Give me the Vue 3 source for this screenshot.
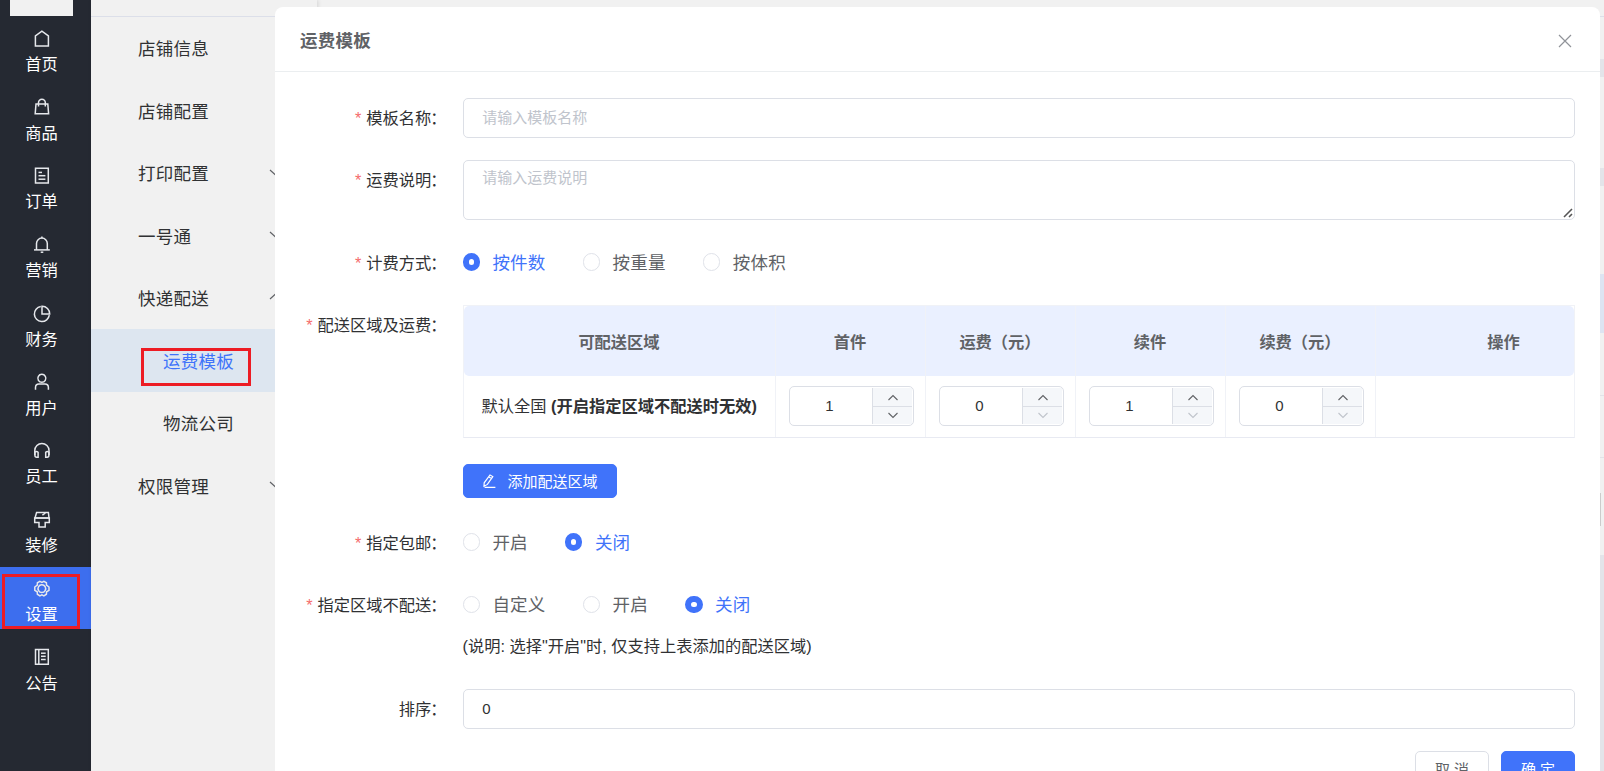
<template>
  <div class="page">
    <!-- Main navigation -->
    <aside class="sidebar">
      <div class="logo"></div>
      <nav class="nav">
        <a
            v-for="item in navItems"
            :key="item.title"
            class="nav-item"
            :class="{ active: item.title === activeNav }"
            @click="activeNav = item.title"
        >
          <svg class="nav-icon" viewBox="0 0 18 18" width="18" height="18">
            <path v-for="(d, i) in item.paths" :key="i" :d="d"/>
          </svg>
          <span>{{ item.title }}</span>
        </a>
      </nav>
    </aside>

    <!-- Settings submenu -->
    <aside class="submenu">
      <div class="submenu-top"></div>
      <div
          v-for="item in subItems"
          :key="item.title"
          class="submenu-item"
          :class="{ child: item.child, active: item.active }"
      >
        <span>{{ item.title }}</span>
        <svg v-if="item.arrow" class="arrow" :class="item.arrow" viewBox="0 0 14 8" width="14" height="8">
          <path d="M1 1L7 6.5L13 1"/>
        </svg>
      </div>
    </aside>

    <main class="content">
      <div class="content-top"></div>
      <div class="content-tabs"></div>
      <div class="band"></div>
      <div class="filters"></div>
      <div class="band"></div>
      <div class="toolbar"></div>
      <div class="table-head"></div>
      <div class="table-row"></div>
      <div class="table-row"></div>
      <div class="pager"><div class="scroll-mark"></div></div>
      <div class="rest"></div>
    </main>

    <!-- Freight template dialog -->
    <section class="dialog">
      <header class="dialog-header">
        <h3>运费模板</h3>
        <svg class="close" viewBox="0 0 14 14" width="14" height="14">
          <path d="M1 1L13 13M13 1L1 13"/>
        </svg>
      </header>

      <div class="form">
        <div class="form-item">
          <label class="required">模板名称<i>：</i></label>
          <input v-model="form.name" class="input" placeholder="请输入模板名称">
        </div>

        <div class="form-item">
          <label class="required">运费说明<i>：</i></label>
          <div class="textarea-wrap">
            <textarea v-model="form.info" class="textarea" placeholder="请输入运费说明"></textarea>
            <svg class="resize" viewBox="0 0 10 10" width="10" height="10">
              <path d="M1 9L9 1M6 9L9 6"/>
            </svg>
          </div>
        </div>

        <div class="form-item">
          <label class="required">计费方式<i>：</i></label>
          <div class="radios">
            <span
                v-for="text in typeOptions"
                :key="text"
                class="radio"
                :class="{ checked: form.type === text }"
                @click="form.type = text"
            ><i></i><span>{{ text }}</span></span>
          </div>
        </div>

        <div class="form-item region-item">
          <label class="required">配送区域及运费<i>：</i></label>
          <div class="region">
            <div class="table">
              <div class="row head">
                <div class="cell first">可配送区域</div>
                <div v-for="col in columns" :key="col.title" class="cell">{{ col.title }}</div>
                <div class="cell last"><span>操作</span></div>
              </div>
              <div class="row body">
                <div class="cell first">默认全国&nbsp;<b>(开启指定区域不配送时无效)</b></div>
                <div v-for="col in columns" :key="col.title" class="cell">
                  <div class="number">
                    <span class="value">{{ col.value }}</span>
                    <div class="steps">
                      <button @click="col.value++">
                        <svg viewBox="0 0 12 7" width="12" height="7"><path d="M1.5 6L6 1.5L10.5 6"/></svg>
                      </button>
                      <button :disabled="col.value <= col.min" @click="col.value--">
                        <svg viewBox="0 0 12 7" width="12" height="7"><path d="M1.5 1L6 5.5L10.5 1"/></svg>
                      </button>
                    </div>
                  </div>
                </div>
                <div class="cell last"></div>
              </div>
            </div>
            <button class="btn primary add">
              <svg viewBox="0 0 16 16" width="16" height="16">
                <path d="M9 2L11.8 3.6L6.4 11.4L3 13.3L3.2 9.8ZM7.8 3.9L10.6 5.5M3.6 14.4H14.4"/>
              </svg>
              <span>添加配送区域</span>
            </button>
          </div>
        </div>

        <div class="form-item">
          <label class="required">指定包邮<i>：</i></label>
          <div class="radios">
            <span
                v-for="text in freeOptions"
                :key="text"
                class="radio"
                :class="{ checked: form.free === text }"
                @click="form.free = text"
            ><i></i><span>{{ text }}</span></span>
          </div>
        </div>

        <div class="form-item">
          <label class="required">指定区域不配送<i>：</i></label>
          <div>
            <div class="radios">
              <span
                  v-for="text in excludeOptions"
                  :key="text"
                  class="radio"
                  :class="{ checked: form.exclude === text }"
                  @click="form.exclude = text"
              ><i></i><span>{{ text }}</span></span>
            </div>
            <p class="tip">(说明: 选择"开启"时, 仅支持上表添加的配送区域)</p>
          </div>
        </div>

        <div class="form-item">
          <label>排序<i>：</i></label>
          <input v-model="form.sort" class="input">
        </div>

        <div class="footer">
          <button class="btn">取 消</button>
          <button class="btn primary">确 定</button>
        </div>
      </div>
    </section>

    <div class="mark mark-nav"></div>
    <div class="mark mark-sub"></div>
  </div>
</template>

<script setup>
import { ref, reactive } from 'vue';

const activeNav = ref('设置');

// Navigation entries with their icon outlines
const navItems = [
  { title: '首页', paths: ['M2.4 16V5.9L8.9 1.2L15.4 5.9V16Z'] },
  { title: '商品', paths: ['M3 6H14.8L15.6 15.7H2.2Z', 'M5.5 8.5V4.6A3.4 3.4 0 0 1 12.3 4.6V8.5'] },
  { title: '订单', paths: ['M2.5 1.3H15.3V16H2.5Z', 'M5.5 5.4H9', 'M5.5 8.7H12.4', 'M5.5 12.2H12.4'] },
  { title: '营销', paths: ['M3.5 14V7.5A5.4 5.4 0 0 1 14.3 7.5V14', 'M1 13.9H16.8', 'M7.7 16.2H10.3', 'M8.9 0.5V2.2'] },
  { title: '财务', paths: ['M7.8 1.6A7.5 7.5 0 1 0 16.3 10.1', 'M9 1.2A7.6 7.6 0 0 1 16.7 8.9H9Z'] },
  { title: '用户', paths: ['M8.9 1.3A4 4 0 1 1 8.8 1.3Z', 'M2.5 16.8V14.4A3.4 3.4 0 0 1 5.9 11.1H12A3.4 3.4 0 0 1 15.4 14.4V16.8'] },
  { title: '员工', paths: ['M1.8 13V8.6A7.1 7.1 0 0 1 16 8.6V13', 'M1.9 10.3A2.3 2.3 0 0 1 5.1 10.3V15.2H3.8A2 2 0 0 1 1.9 13.2Z', 'M15.9 10.3A2.3 2.3 0 0 0 12.7 10.3V15.2H14A2 2 0 0 0 15.9 13.2Z'] },
  { title: '装修', paths: ['M3.6 1.5H15.4L16 7H2Z', 'M1.7 7H16.3V11.6H12.2V16H6V11.6H1.7Z', 'M9.4 4.2L12.4 2'] },
  { title: '设置', paths: ['M6.9 1.4L8.9 2.4L10.9 1.4L13.4 2.8L13.5 5.1L16 7V10.3L13.6 11.8L13.4 14.2L10.9 15.8L8.9 14.8L6.9 15.8L4.4 14.2L4.2 11.8L1.8 10.3V7L4.3 5.1L4.4 2.8Z', 'M8.9 4.8A3.8 3.8 0 1 1 8.8 4.8Z'] },
  { title: '公告', paths: ['M2.5 1.4H15.3V16.2H2.5Z', 'M5.8 1.5V16.1', 'M8 5.2H12.7', 'M8 8.3H12.7', 'M8 11.5H12.7'] },
];

const subItems = [
  { title: '店铺信息' },
  { title: '店铺配置' },
  { title: '打印配置', arrow: 'down' },
  { title: '一号通', arrow: 'down' },
  { title: '快递配送', arrow: 'up' },
  { title: '运费模板', child: true, active: true },
  { title: '物流公司', child: true },
  { title: '权限管理', arrow: 'down' },
];

const typeOptions = ['按件数', '按重量', '按体积'];
const freeOptions = ['开启', '关闭'];
const excludeOptions = ['自定义', '开启', '关闭'];

const form = reactive({
  name: '',
  info: '',
  type: '按件数',
  free: '关闭',
  exclude: '关闭',
  sort: '0',
});

const columns = reactive([
  { title: '首件', value: 1, min: 0 },
  { title: '运费（元）', value: 0, min: 0 },
  { title: '续件', value: 1, min: 1 },
  { title: '续费（元）', value: 0, min: 0 },
]);
</script>

<style>
body {
  margin: 0;
  overflow: hidden;
}
</style>

<style scoped>
.page {
  position: relative;
  display: flex;
  width: 100%;
  height: 100vh;
  overflow: hidden;
  background: #f1f1f1;
  color: #303133;
  font-family: "Liberation Sans", "Noto Sans CJK SC", sans-serif;
  font-size: 16.25px;
}

.page *,
.page *::before {
  box-sizing: border-box;
}

button,
input,
textarea {
  font-family: inherit;
}

/* Sidebar */
.sidebar {
  flex: none;
  width: 91px;
  background: #252932;
}

.logo {
  width: 63px;
  height: 16px;
  margin-left: 10px;
  background: #f1f1f1;
}

.nav {
  display: flex;
  flex-direction: column;
  gap: 6.75px;
  padding-top: 1px;
}

.nav-item {
  display: flex;
  flex-direction: column;
  align-items: center;
  height: 62px;
  padding: 12.5px 8px 0 0;
  color: #fff;
  line-height: 20px;
  cursor: pointer;
}

.nav-item.active {
  background: #3d6eee;
}

.nav-icon {
  margin-bottom: 6.4px;
  fill: none;
  stroke: #e6e8ec;
  stroke-width: 1.5;
}

/* Submenu */
.submenu {
  flex: none;
  width: 226px;
  box-shadow: 1px 0 4px rgba(0, 0, 0, 0.12);
}

.submenu-top {
  height: 16.8px;
  border-bottom: 1px solid #dcdfe9;
}

.submenu-item {
  display: flex;
  align-items: center;
  justify-content: space-between;
  height: 62.5px;
  padding: 0 34px 0 47px;
  font-size: 17.5px;
  letter-spacing: 0.25px;
}

.submenu-item span {
  margin-top: -1px;
}

.submenu-item.child {
  padding-left: 72px;
}

.submenu-item.active {
  background: #dde6f0;
  color: #4073fa;
}

.arrow {
  margin-top: -1px;
  fill: none;
  stroke: #606266;
  stroke-width: 1.2;
}

.arrow.up {
  margin-top: -4px;
  transform: rotate(180deg);
}

/* Page behind the dialog */
.content {
  flex: 1;
  display: flex;
  flex-direction: column;
}

.content-top {
  height: 17px;
  border-bottom: 1px solid #dcdfe9;
}

.content-tabs {
  height: 42px;
}

.band {
  height: 18px;
  background: #e3e4e9;
}

.filters {
  height: 91px;
}

.toolbar {
  height: 88px;
}

.table-head {
  height: 59px;
  background: #dde4f2;
}

.table-row {
  height: 62.5px;
  border-bottom: 1px solid #e2e3e8;
}

.pager {
  display: flex;
  justify-content: flex-end;
  height: 97px;
  padding: 35px 3px 0 0;
}

.scroll-mark {
  width: 1px;
  height: 33px;
  background: #ccc;
}

.rest {
  flex: 1;
  background: #e3e4e9;
}

/* Dialog */
.dialog {
  position: absolute;
  top: 7px;
  left: 275px;
  width: 1325px;
  height: 820px;
  background: #fff;
  border-radius: 8px;
}

.dialog-header {
  display: flex;
  align-items: center;
  justify-content: space-between;
  height: 65px;
  padding: 0 28px 0 25px;
  border-bottom: 1px solid #ebeef0;
}

.dialog-header h3 {
  margin: 0;
  color: #606266;
  font-size: 17.5px;
  letter-spacing: 0.25px;
}

.close {
  margin-top: 4px;
  fill: none;
  stroke: #909399;
  stroke-width: 1.2;
}

.form {
  padding: 25.6px 25px 0 0;
}

.form-item {
  display: grid;
  grid-template-columns: 187.5px 1fr;
  margin-bottom: 22.5px;
}

.form-item label {
  padding-right: 15px;
  line-height: 40px;
  text-align: right;
  white-space: nowrap;
}

/* Pull the full-width colon towards the text */
.form-item label i {
  font-style: normal;
  margin: 0 1px 0 -1px;
}

.required::before {
  content: "*";
  margin-right: 5px;
  color: #f56c6c;
}

.input {
  width: 100%;
  height: 40px;
  padding: 0 18.75px 1px;
  border: 1px solid #dcdfe6;
  border-radius: 5px;
  outline: none;
  color: #303133;
  font-size: 15px;
}

.textarea-wrap {
  position: relative;
  height: 60px;
}

.textarea {
  display: block;
  width: 100%;
  height: 60px;
  padding: 5.5px 18.75px;
  border: 1px solid #dcdfe6;
  border-radius: 5px;
  outline: none;
  resize: none;
  color: #303133;
  font-size: 15px;
  line-height: 22.5px;
}

.input::placeholder,
.textarea::placeholder {
  color: #c0c4cc;
}

.resize {
  position: absolute;
  right: 2px;
  bottom: 2px;
  fill: none;
  stroke: #555;
  stroke-width: 1.6;
}

/* Radios */
.radios {
  display: flex;
  gap: 37.2px;
  height: 40px;
}

.radio {
  display: flex;
  align-items: center;
  color: #606266;
  font-size: 17.5px;
  letter-spacing: 0.2px;
  cursor: pointer;
}

.radio span {
  margin-top: -3px;
}

.radio i {
  width: 17.5px;
  height: 17.5px;
  margin: 0 12.4px 1px 0;
  border: 1px solid #dfe2e9;
  border-radius: 50%;
  background: #fff;
}

.radio.checked {
  color: #4073fa;
}

.radio.checked i {
  border: 6.25px solid #4073fa;
}

.tip {
  margin: 0;
  padding-top: 2px;
  line-height: 39px;
}

/* Region table */
.region-item {
  margin-bottom: 24.5px;
}

.region {
  min-width: 0;
}

.table {
  overflow: hidden;
  border: 1px solid #f0f2f7;
  border-bottom-color: #e8eaf2;
}

.row {
  display: flex;
}

.cell {
  flex: none;
  display: flex;
  align-items: center;
  justify-content: center;
  width: 150px;
  border-right: 1px solid #f0f2f7;
  white-space: nowrap;
}

.cell.first {
  width: 312px;
}

.cell.last {
  width: 257px;
}

.head {
  height: 70px;
  background: #eaf0ff;
  border-radius: 5px;
  color: #606266;
  font-weight: bold;
}

.body {
  height: 60.5px;
}

.body .cell.first {
  justify-content: flex-start;
  padding: 0 0 2px 18px;
}

.number {
  display: flex;
  width: 125px;
  height: 40px;
  padding: 1px;
  margin-left: 2px;
  border: 1px solid #dcdfe6;
  border-radius: 5px;
  font-size: 15px;
}

.value {
  flex: 1;
  padding-right: 3px;
  line-height: 35px;
  text-align: center;
}

.steps {
  display: flex;
  flex-direction: column;
  width: 40px;
  border-left: 1px solid #dcdfe6;
}

.steps button {
  flex: 1;
  display: flex;
  align-items: center;
  justify-content: center;
  padding: 0 0 0 1px;
  border: 0;
  background: #f5f7fa;
  color: #606266;
}

.steps button + button {
  border-top: 1px solid #dcdfe6;
}

.steps button:disabled {
  color: #c0c4cc;
}

.steps svg {
  fill: none;
  stroke: currentColor;
  stroke-width: 1.1;
}

/* Buttons */
.btn {
  display: flex;
  align-items: center;
  justify-content: center;
  width: 74px;
  height: 34px;
  padding: 0;
  border: 1px solid #dcdfe6;
  border-radius: 5px;
  background: #fff;
  color: #606266;
  font-size: 15px;
  cursor: pointer;
}

.btn.primary {
  border-color: #4073fa;
  background: #4073fa;
  color: #fff;
}

.add {
  gap: 10px;
  width: 154px;
  margin-top: 26.5px;
}

.add span {
  margin-top: -2px;
}

.add svg {
  fill: none;
  stroke: #fff;
  stroke-width: 1.2;
}

.footer {
  display: flex;
  justify-content: flex-end;
  gap: 12px;
}

/* Highlight frames */
.mark {
  position: absolute;
  border: 3px solid #ed1c24;
}

.mark-nav {
  top: 574px;
  left: 2px;
  width: 78px;
  height: 55px;
}

.mark-sub {
  top: 348px;
  left: 141px;
  width: 110px;
  height: 38px;
}
</style>
